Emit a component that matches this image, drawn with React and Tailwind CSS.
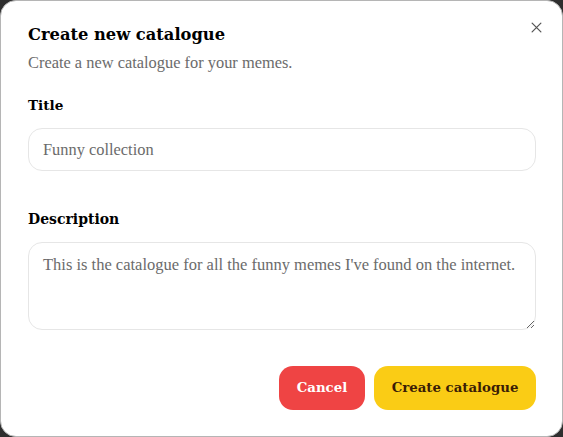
import React from 'react';

export default function App() {
  return (
    <div className="h-[437px] w-[563px] bg-[#2e2e2e]">
      <div className="relative flex h-full w-full flex-col rounded-2xl border border-[#b5b5b5] bg-white pl-[27px] pr-[26px] pt-[22px] font-['Liberation_Serif',serif]">
        {/* close */}
        <button className="absolute right-[18px] top-[19px] text-[#555]" aria-label="Close">
          <svg width="15" height="15" viewBox="0 0 24 24" fill="none" stroke="currentColor" strokeWidth="2" strokeLinecap="round">
            <path d="M5 5l14 14M19 5L5 19" />
          </svg>
        </button>

        <h2 className="font-['DejaVu_Serif',serif] text-[16.3px] font-bold leading-6 text-black">Create new catalogue</h2>
        <p className="mt-[4px] text-[16.4px] leading-6 text-[#6b6b6b]">Create a new catalogue for your memes.</p>

        <label className="mt-[20px] font-['DejaVu_Serif',serif] text-[13.6px] font-bold leading-5 text-black">Title</label>
        <input
          className="mt-[13px] h-[43px] w-full rounded-[14px] border border-[#e6e6e6] px-[14px] font-['Liberation_Serif',serif] text-[16.4px] text-[#6b6b6b] outline-none"
          defaultValue="Funny collection"
        />

        <label className="mt-[38px] font-['DejaVu_Serif',serif] text-[14px] font-bold leading-5 text-black">Description</label>
        <textarea
          className="mt-[13px] h-[88px] w-full rounded-[14px] border border-[#e6e6e6] px-[14px] py-[10px] font-['Liberation_Serif',serif] text-[16.5px] leading-6 text-[#6b6b6b] outline-none"
          defaultValue="This is the catalogue for all the funny memes I've found on the internet."
        />

        <div className="mt-[36px] flex justify-end gap-[9px]">
          <button className="h-[44px] w-[86px] rounded-[14px] bg-[#ef4444] font-['DejaVu_Serif',serif] text-[13.3px] font-bold text-white">Cancel</button>
          <button className="h-[44px] w-[162px] rounded-[14px] bg-[#facc15] font-['DejaVu_Serif',serif] text-[13.3px] font-bold text-[#3b1d06]">Create catalogue</button>
        </div>
      </div>
    </div>
  );
}
